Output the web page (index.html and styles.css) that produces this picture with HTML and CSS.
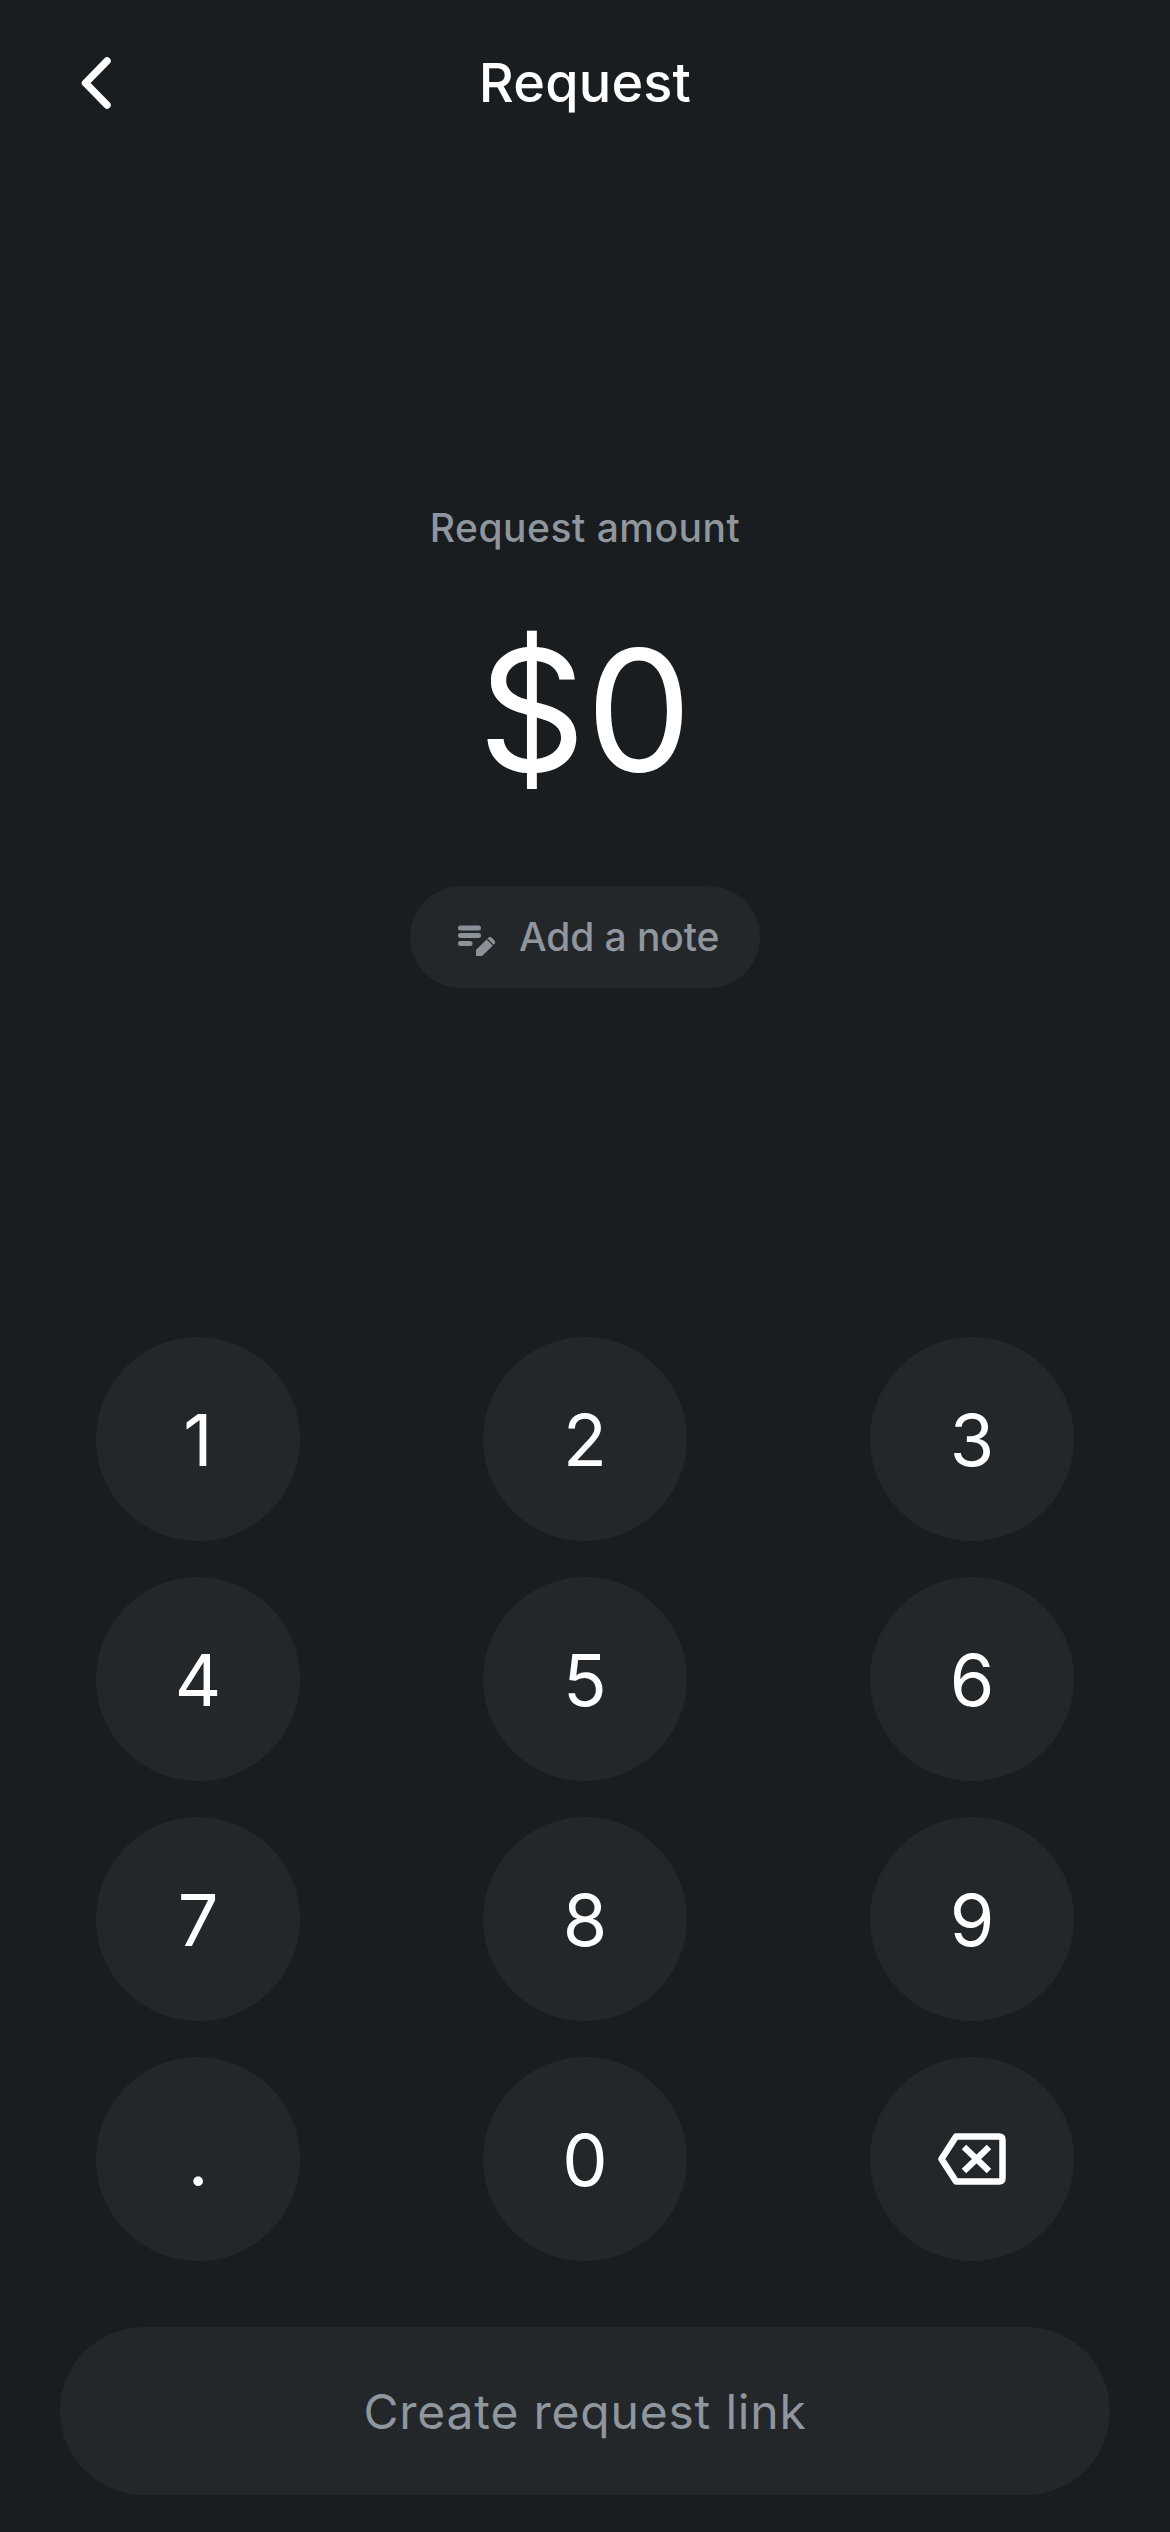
FILE: index.html
```html
<!DOCTYPE html>
<html lang="en">
  <head>
    <meta charset="UTF-8" />
    <meta name="viewport" content="width=device-width, initial-scale=1.0" />
    <title>Request</title>
    <link rel="stylesheet" href="styles.css">
  </head>
  <body>
    <div class="screen">
      <header class="top-bar">
        <button class="back-btn" aria-label="Back">
          <svg width="36" height="60" viewBox="0 0 36 60">
            <path d="M29 8 L7.500 30 L29 52" fill="none" stroke="#fff" stroke-width="7.500" stroke-linecap="round" stroke-linejoin="round" />
          </svg>
        </button>
        <h1>Request</h1>
      </header>

      <section class="amount">
        <div class="amount-label">Request amount</div>
        <div class="amount-value">$0</div>
        <button class="note-btn">
          <svg width="40" height="40" viewBox="0 0 40 40">
            <path d="M2.500 11 H20.500 M2.500 18.500 H20.500 M2.500 26.500 H12" fill="none" stroke="#8b9299" stroke-width="5" stroke-linecap="round" />
            <path d="M18 39 L18 33 L30 21 Q32 19 34 21 L36.500 23.500 Q38 25.500 36.500 27 L24 39 Z" fill="#8b9299" />
            <path d="M29 22 L35.500 28.500" fill="none" stroke="#23272a" stroke-width="1.200" />
          </svg>
          <span class="note-text">Add a note</span>
        </button>
      </section>

      <section class="keypad">
        <button class="key">1</button>
        <button class="key">2</button>
        <button class="key">3</button>
        <button class="key">4</button>
        <button class="key">5</button>
        <button class="key">6</button>
        <button class="key">7</button>
        <button class="key">8</button>
        <button class="key">9</button>
        <button class="key">.</button>
        <button class="key">0</button>
        <button class="key" aria-label="Delete">
          <svg width="68" height="52" viewBox="0 0 68 52">
            <path d="M18 3.500 H61 Q64.500 3.500 64.500 7 V45 Q64.500 48.500 61 48.500 H18 L3.500 26 Z" fill="none" stroke="#fff" stroke-width="6.500" stroke-linejoin="round" />
            <path d="M26 14 L51 38 M51 14 L26 38" fill="none" stroke="#fff" stroke-width="6.500" />
          </svg>
        </button>
      </section>

      <button class="submit-btn">Create request link</button>
    </div>
  </body>
</html>
```

FILE: styles.css
```css
body {
    margin: 0;
    background-color: #191d20;
    font-family: Inter, "Noto Sans", sans-serif;
    color: #fff;
}

button {
    font-family: inherit;
    border: none;
    padding: 0;
    cursor: pointer;
}

.screen {
    height: 2532px;
    overflow: hidden;
    display: flex;
    flex-direction: column;
}

.top-bar {
    position: relative;
    height: 166px;
    display: flex;
    align-items: center;
    justify-content: center;
}

.top-bar h1 {
    margin: 0;
    font-size: 54px;
    font-weight: 450;
    letter-spacing: 0.2px;
    line-height: 64px;
}

.back-btn {
    position: absolute;
    left: 78px;
    top: 53px;
    background: none;
    display: flex;
}

.amount {
    margin-top: 338px;
    display: flex;
    flex-direction: column;
    align-items: center;
}

.amount-label {
    font-size: 39px;
    font-weight: 450;
    line-height: 48px;
    letter-spacing: 0.5px;
    color: #8f969d;
}

.amount-value {
    margin-top: 53px;
    font-size: 168px;
    line-height: 210px;
}

.note-btn {
    margin-top: 71px;
    width: 350px;
    height: 102px;
    padding-left: 48px;
    border-radius: 51px;
    background: #23272a;
    color: #8f969d;
    font-size: 39px;
    font-weight: 450;
    letter-spacing: -0.1px;
    display: flex;
    align-items: center;
    gap: 21px;
}

.note-text {
    margin-top: -2px;
}

.keypad {
    margin-top: 349px;
    padding: 0 96px;
    display: grid;
    grid-template-columns: repeat(3, 204px);
    justify-content: space-between;
    row-gap: 36px;
}

.key {
    width: 204px;
    height: 204px;
    border-radius: 50%;
    background: #23272a;
    color: #fff;
    font-size: 72px;
    display: flex;
    align-items: center;
    justify-content: center;
}

.submit-btn {
    margin: 66px 60px 0;
    height: 168px;
    border-radius: 84px;
    background: #23272a;
    color: #8f969d;
    font-size: 48px;
    letter-spacing: 0.8px;
}
```
